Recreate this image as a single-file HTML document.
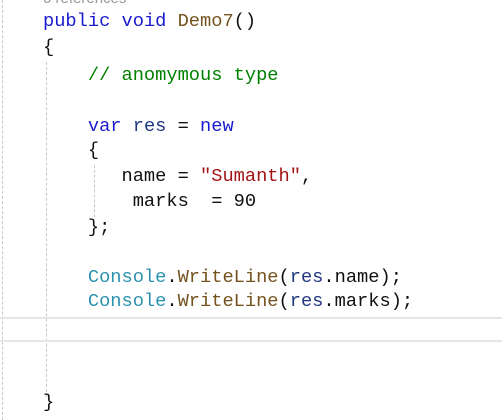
<!DOCTYPE html>
<html><head><style>
html,body{margin:0;padding:0;background:#fff;width:502px;height:420px;overflow:hidden;position:relative}
.l{position:absolute;left:43px;font-family:"Liberation Mono",monospace;font-size:18.7px;line-height:25px;white-space:pre;color:#111}
.k{color:#1a1ad0}.m{color:#74531f}.t{color:#2b91af}.s{color:#a31515}.c{color:#008000}.v{color:#1f377f}
.g{position:absolute;width:0;border-left:1px dashed #c8c8c8}
.ref{position:absolute;left:43px;top:-10px;font-family:"Liberation Sans",sans-serif;font-size:15px;color:#999}
</style></head><body>
<div class="g" style="left:2px;top:0;height:420px"></div>
<div class="g" style="left:46px;top:62px;height:335px"></div>
<div class="g" style="left:94px;top:165px;height:52px"></div>
<div style="position:absolute;left:0;top:317px;width:502px;height:21px;border-top:2px solid #e6e6ea;border-bottom:2px solid #e6e6ea"></div>
<div class="ref">0 references</div>
<div class="l" style="top:9px"><span class="k">public</span> <span class="k">void</span> <span class="m">Demo7</span>()</div>
<div class="l" style="top:35px">{</div>
<div class="l" style="top:63px">    <span class="c">// anomymous type</span></div>
<div class="l" style="top:114px">    <span class="k">var</span> <span class="v">res</span> = <span class="k">new</span></div>
<div class="l" style="top:138px">    {</div>
<div class="l" style="top:164px">       name = <span class="s">"Sumanth"</span>,</div>
<div class="l" style="top:189px">        marks  = 90</div>
<div class="l" style="top:215px">    };</div>
<div class="l" style="top:265px">    <span class="t">Console</span>.<span class="m">WriteLine</span>(<span class="v">res</span>.name);</div>
<div class="l" style="top:289px">    <span class="t">Console</span>.<span class="m">WriteLine</span>(<span class="v">res</span>.marks);</div>
<div class="l" style="top:390px">}</div>
</body></html>
